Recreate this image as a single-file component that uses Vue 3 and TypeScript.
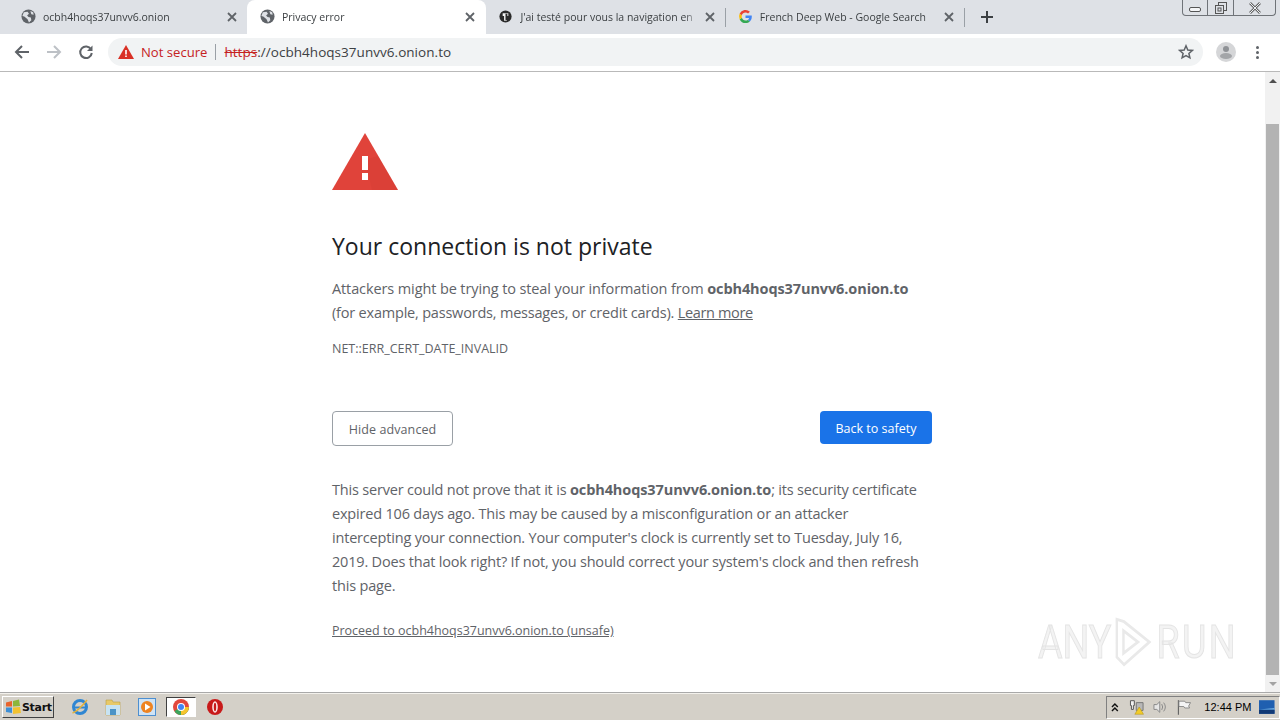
<script setup lang="ts">
interface Tab {
  title: string
  icon: 'globe' | 'dark' | 'google'
  active?: boolean
}

const tabs: Tab[] = [
  { title: 'ocbh4hoqs37unvv6.onion', icon: 'globe' },
  { title: 'Privacy error', icon: 'globe', active: true },
  { title: "J'ai testé pour vous la navigation en", icon: 'dark' },
  { title: 'French Deep Web - Google Search', icon: 'google' }
]
</script>

<template>
  <div class="screen">
    <div class="tabstrip">
      <div v-for="(tab, i) in tabs" :key="i" class="tab" :class="{ active: tab.active, sep: i >= 2 }">
        <svg v-if="tab.icon === 'globe'" class="favicon" viewBox="0 0 16 16">
          <circle cx="8" cy="8" r="7.5" fill="#5f6368" />
          <path d="M3 3.5 7 3l1.5 2-2 2L8 8.500l2.500.5.5 3-2.500 2.500L7 11 3.500 8 1.500 7.500zM10 2l3 1.500.5 2.500-2.500-.5z" fill="#dee1e6" />
        </svg>
        <svg v-else-if="tab.icon === 'dark'" class="favicon" viewBox="0 0 16 16">
          <circle cx="8" cy="8" r="6.500" fill="#2b2b2b" />
          <path d="M5 4.500h6v3H9.500v5h-3v-5H5z" fill="#f4f4f4" />
          <path d="M8 5h2v7H8z" fill="#2b2b2b" />
        </svg>
        <svg v-else class="favicon" viewBox="0 0 16 16">
          <path d="M14.700 8.200c0-.5 0-1-.1-1.400H8v2.700h3.800a3.200 3.200 0 0 1-1.400 2.100l2.200 1.700c1.300-1.200 2.100-3 2.100-5.100z" fill="#4285f4" />
          <path d="M8 15c1.900 0 3.400-.6 4.600-1.700l-2.200-1.700c-.6.400-1.400.7-2.400.7-1.800 0-3.400-1.200-3.900-2.900L1.800 11.100A7 7 0 0 0 8 15z" fill="#34a853" />
          <path d="M4.100 9.400a4.300 4.300 0 0 1 0-2.800L1.800 4.900a7 7 0 0 0 0 6.200z" fill="#fbbc05" />
          <path d="M8 3.800c1 0 2 .4 2.700 1l2-2A7 7 0 0 0 1.800 4.900l2.300 1.700C4.600 5 6.200 3.800 8 3.800z" fill="#ea4335" />
        </svg>
        <span class="tab-title">{{ tab.title }}</span>
        <svg class="tab-close" viewBox="0 0 10 10">
          <path d="M1 1l8 8M9 1l-8 8" stroke="#5f6368" stroke-width="1.800" fill="none" />
        </svg>
      </div>
      <div class="new-tab">
        <svg viewBox="0 0 12 12" width="12" height="12">
          <path d="M6 0v12M0 6h12" stroke="#3c4043" stroke-width="2" fill="none" />
        </svg>
      </div>
      <div class="win-controls">
        <div class="win-btn min">
          <svg viewBox="0 0 14 8" width="14" height="8"><rect x="1.500" y="2.500" width="11" height="4" rx="1.500" fill="#f4f5f7" stroke="#555" /></svg>
        </div>
        <div class="win-btn">
          <svg viewBox="0 0 14 14" width="14" height="14">
            <rect x="4.500" y="1.500" width="8" height="8" fill="none" stroke="#555" />
            <rect x="1.500" y="4.500" width="8" height="8" fill="#dee1e6" stroke="#555" />
            <rect x="4" y="7" width="3" height="3" fill="none" stroke="#555" />
          </svg>
        </div>
        <div class="win-btn close">
          <svg viewBox="0 0 14 12" width="14" height="12">
            <path d="M2 1l10 10M12 1L2 11" stroke="#666" stroke-width="2.600" fill="none" />
            <path d="M2 1l10 10M12 1L2 11" stroke="#eef0f3" stroke-width="1" fill="none" />
          </svg>
        </div>
      </div>
    </div>

    <div class="toolbar">
      <button class="nav-btn">
        <svg viewBox="0 0 16 16" width="16" height="16"><path d="M15 8H2.500M8 2 2 8l6 6" stroke="#5f6368" stroke-width="2" fill="none" /></svg>
      </button>
      <button class="nav-btn">
        <svg viewBox="0 0 16 16" width="16" height="16"><path d="M1 8h12.500M8 2l6 6-6 6" stroke="#bdc1c6" stroke-width="2" fill="none" /></svg>
      </button>
      <button class="nav-btn">
        <svg viewBox="0 0 16 16" width="16" height="16">
          <path d="M13 5.200A5.800 5.800 0 1 0 13.800 9" stroke="#5f6368" stroke-width="2" fill="none" />
          <path d="M14.500 1.500v5.500H9z" fill="#5f6368" />
        </svg>
      </button>
      <div class="omnibox">
        <svg class="warn-small" viewBox="0 0 16 14" width="16" height="14">
          <path d="M8 0l8 14H0z" fill="#d93025" />
          <path d="M7.200 5h1.600v4.500H7.200zM7.200 10.500h1.600V12H7.200z" fill="#fff" />
        </svg>
        <span class="not-secure">Not secure</span>
        <span class="omni-sep"></span>
        <span class="url"><s class="scheme">https</s>://ocbh4hoqs37unvv6.onion.to</span>
        <svg class="star" viewBox="0 0 16 16" width="16" height="16">
          <path d="M8 1.800l1.800 4.200 4.500.4-3.400 3 1 4.400L8 11.500l-3.900 2.300 1-4.400-3.400-3 4.500-.4z" fill="none" stroke="#5f6368" stroke-width="1.500" />
        </svg>
      </div>
      <div class="avatar">
        <svg viewBox="0 0 20 20" width="20" height="20">
          <circle cx="10" cy="10" r="10" fill="#d5d6d8" />
          <circle cx="10" cy="7" r="3" fill="#8f9296" />
          <ellipse cx="10" cy="14" rx="6" ry="3" fill="#a3a5a8" />
        </svg>
      </div>
      <div class="menu-dots"><i></i><i></i><i></i></div>
    </div>

    <div class="viewport">
      <div class="page">
        <main class="interstitial">
          <svg class="warn-big" viewBox="0 0 66 58" width="66" height="58">
            <path d="M33 1l33 57H0z" fill="#e0433a" />
            <path d="M33 28l7 30h26L46 24z" fill="#c9382f" opacity=".2" />
            <path d="M30 24h6v14h-6zM30 41h6v7h-6z" fill="#fff" />
          </svg>
          <h1>Your connection is not private</h1>
          <p class="lead">
            Attackers might be trying to steal your information from <b>ocbh4hoqs37unvv6.onion.to</b><br />
            <span class="lead-second">(for example, passwords, messages, or credit cards).</span> <a>Learn more</a>
          </p>
          <div class="err-code">NET::ERR_CERT_DATE_INVALID</div>
          <div class="actions">
            <button class="btn-outline">Hide advanced</button>
            <button class="btn-primary">Back to safety</button>
          </div>
          <p class="details">
            This server could not prove that it is <b>ocbh4hoqs37unvv6.onion.to</b>; its security certificate<br />
            expired 106 days ago. This may be caused by a misconfiguration or an attacker<br />
            intercepting your connection. Your computer's clock is currently set to Tuesday, July 16,<br />
            2019. Does that look right? If not, you should correct your system's clock and then refresh<br />
            this page.
          </p>
          <a class="proceed">Proceed to ocbh4hoqs37unvv6.onion.to (unsafe)</a>
        </main>
      </div>
      <div class="scrollbar">
        <div class="scroll-arrow"><span class="arrow-up"></span></div>
        <div class="scroll-track"><div class="scroll-thumb"></div></div>
        <div class="scroll-arrow"><span class="arrow-down"></span></div>
      </div>
      <div class="watermark">
        <span>ANY</span>
        <svg viewBox="0 0 64 66" width="64" height="66">
          <path d="M6 3v50l12 10 42-30L18 6z" fill="none" stroke="#e9e9e9" stroke-width="4" />
          <path d="M17 18v30l24-15z" fill="none" stroke="#e9e9e9" stroke-width="4" />
        </svg>
        <span class="wm-run">RUN</span>
      </div>
    </div>

    <div class="taskbar">
      <button class="start">
        <svg viewBox="0 0 16 16" width="16" height="16">
          <path d="M1 3.500 7 2v5.500H1z" fill="#e8632c" />
          <path d="M8 2l6-1.500 1 6.500-7 .5z" fill="#8cb63c" />
          <path d="M1 8.500h6V14l-6-1z" fill="#3d8fd6" />
          <path d="M8 8.500l7-.5 1 6-8 1z" fill="#f2c230" />
        </svg>
        Start
      </button>
      <div class="quick">
        <svg viewBox="0 0 18 18" width="18" height="18">
          <circle cx="9" cy="9" r="6.500" fill="none" stroke="#2f86d2" stroke-width="3" />
          <path d="M3 9.500h12" stroke="#2f86d2" stroke-width="2" />
          <path d="M1.500 15C5 14 12 7 16 2" stroke="#e3b23c" stroke-width="1.500" fill="none" />
        </svg>
        <svg viewBox="0 0 18 18" width="18" height="18">
          <path d="M2 2h6l1 2h7v13H2z" fill="#e8c969" stroke="#b99d45" stroke-width=".6" />
          <path d="M2 7h14v10H2z" fill="#c7e3f3" />
          <path d="M6 17v-6h6v6z" fill="#4a93c7" />
        </svg>
        <svg viewBox="0 0 18 18" width="18" height="18">
          <rect x=".5" y=".5" width="17" height="17" fill="#cfe3f5" stroke="#4d8fd0" />
          <circle cx="9" cy="9" r="6" fill="#ee8321" />
          <path d="M7 5.500v7l5.500-3.500z" fill="#fff" />
        </svg>
        <span class="task-active">
          <svg viewBox="0 0 16 16" width="16" height="16">
            <circle cx="8" cy="8" r="8" fill="#e2483d" />
            <path d="M1.500 12 8 8h8a8 8 0 0 1-8 8 8 8 0 0 1-6.500-4z" fill="#3ba55c" />
            <path d="M8 8h8a8 8 0 0 1-8 8z" fill="#f6c52c" />
            <circle cx="8" cy="8" r="4" fill="#fff" />
            <circle cx="8" cy="8" r="3" fill="#4285f4" />
          </svg>
        </span>
        <svg viewBox="0 0 18 18" width="18" height="18">
          <circle cx="9" cy="9" r="8" fill="#c81a1a" />
          <ellipse cx="9" cy="9" rx="2.800" ry="5.800" fill="#fbe9e9" />
          <ellipse cx="9" cy="9" rx="1.200" ry="4.200" fill="#c81a1a" />
        </svg>
      </div>
      <div class="tray">
        <svg viewBox="0 0 8 9" width="8" height="9"><path d="M1 4l3-3 3 3M1 8l3-3 3 3" stroke="#111" stroke-width="1.500" fill="none" /></svg>
        <svg class="tray-net" viewBox="0 0 16 16" width="16" height="16">
          <path d="M1.500 1.500h4v5h-1v4h-2v-4h-1z" fill="#f2f2f2" stroke="#555" />
          <path d="M7.500 3.500h7v8h-7z" fill="#b8b8b8" stroke="#777" />
          <path d="M10.500 8l4.500 7.500H6z" fill="#f1cb29" stroke="#a98a10" stroke-width=".5" />
        </svg>
        <svg viewBox="0 0 16 16" width="16" height="16">
          <path d="M2 5.500h3l3-3v11l-3-3H2z" fill="#e6e6e6" stroke="#888" />
          <path d="M10 5q2 3 0 6M12 3.500q3.500 4.500 0 9" stroke="#888" fill="none" />
        </svg>
        <svg viewBox="0 0 16 16" width="16" height="16">
          <path d="M2.500 1v15" stroke="#666" stroke-width="1.200" />
          <path d="M3 2h6l1 1.500h5l-2 3.500 1 2H9L8 7.500H3z" fill="#f4f4f4" stroke="#777" stroke-width=".8" />
        </svg>
        <span class="clock">12:44 PM</span>
        <svg class="show-desktop" viewBox="0 0 16 14" width="16" height="14">
          <rect width="16" height="14" fill="#1f5fb0" />
          <path d="M0 10h16v4H0z" fill="#123a75" />
          <path d="M0 9.500 16 8v1.500H0z" fill="#73b1e4" />
        </svg>
      </div>
    </div>
  </div>
</template>

<style scoped>
.screen {
  width: 1280px;
  height: 720px;
  display: flex;
  flex-direction: column;
  overflow: hidden;
  font-family: "Open Sans", "Noto Sans", sans-serif;
  color: #5f6368;
  background: #fff;
}

/* tab strip */
.tabstrip {
  height: 34px;
  flex: none;
  display: flex;
  background: #dee1e6;
}

.tab {
  width: 239.400px;
  height: 34px;
  flex: none;
  display: flex;
  align-items: center;
  padding: 0 11px 1px 21px;
  box-sizing: border-box;
  position: relative;
  font-size: 10.500px;
  color: #3c4043;
}

.tab.active {
  background: #fff;
  border-radius: 8px 8px 0 0;
  padding-left: 13px;
}

.tab:first-child {
  width: 247px;
  padding-right: 10px;
}

.tab.sep {
  padding-left: 12px;
}

.tab.sep::after {
  content: "";
  position: absolute;
  right: 0;
  top: 8px;
  height: 19px;
  width: 1px;
  background: #9aa0a6;
}

.favicon {
  width: 15px;
  height: 15px;
  flex: none;
  margin-right: 7px;
}

.tab-title {
  flex: 1;
  white-space: nowrap;
  overflow: hidden;
  -webkit-mask-image: linear-gradient(to right, #000 92%, transparent 100%);
  mask-image: linear-gradient(to right, #000 92%, transparent 100%);
}

.tab-close {
  width: 10px;
  height: 10px;
  flex: none;
  margin-left: 6px;
}

.new-tab {
  width: 44px;
  display: flex;
  align-items: center;
  justify-content: center;
}

.win-controls {
  margin-left: auto;
  margin-right: 4px;
  height: 16px;
  display: flex;
  border: 1px solid #6f7378;
  border-top: none;
  border-radius: 0 0 4px 4px;
  box-sizing: border-box;
}

.win-btn {
  width: 25px;
  display: flex;
  align-items: center;
  justify-content: center;
  border-right: 1px solid #6f7378;
}

.win-btn.min {
  padding-top: 3px;
  box-sizing: border-box;
}

.win-btn.close {
  width: 41px;
  border-right: none;
}

/* toolbar */
.toolbar {
  height: 38px;
  flex: none;
  display: flex;
  align-items: center;
  padding: 0 8px 1px 6px;
  box-sizing: border-box;
  background: #fff;
  border-bottom: 1px solid #b9b9b9;
}

.nav-btn {
  width: 32px;
  height: 28px;
  padding: 0;
  border: none;
  background: none;
  display: flex;
  align-items: center;
  justify-content: center;
}

.omnibox {
  width: 1095px;
  height: 28px;
  margin-left: 6px;
  display: flex;
  align-items: center;
  padding: 0 9px 0 10px;
  box-sizing: border-box;
  background: #f1f3f4;
  border-radius: 14px;
  font-size: 13.500px;
}

.warn-small {
  flex: none;
}

.not-secure {
  margin-left: 7px;
  color: #c5221f;
  font-size: 13.100px;
}

.omni-sep {
  width: 1px;
  height: 16px;
  margin: 0 8px;
  background: #9aa0a6;
}

.url {
  color: #3c4043;
  flex: 1;
  letter-spacing: 0.040px;
}

.scheme {
  color: #c5221f;
}

.avatar {
  width: 20px;
  height: 20px;
  margin-left: 13px;
}

.menu-dots {
  margin-left: 20px;
  display: flex;
  flex-direction: column;
  gap: 2px;
}

.menu-dots i {
  width: 3px;
  height: 3px;
  background: #5f6368;
  border-radius: 50%;
}

/* page */
.viewport {
  flex: 1;
  display: flex;
  position: relative;
  min-height: 0;
  border-bottom: 1px solid #a9a9a9;
}

.page {
  flex: 1;
  min-width: 0;
  overflow: hidden;
}

.interstitial {
  width: 600px;
  margin-left: 332px;
  padding-top: 60px;
  font-size: 14.500px;
  letter-spacing: -0.110px;
  line-height: 24px;
}

.warn-big {
  display: block;
}

h1 {
  margin: 38px 0 0;
  font-size: 23px;
  letter-spacing: 0;
  line-height: 36px;
  font-weight: 400;
  color: #202124;
}

.lead {
  margin: 13px 0 0;
}

.lead-second {
  letter-spacing: -0.200px;
}

.lead a,
.proceed {
  color: #5f6368;
  text-decoration: underline;
}

.lead a {
  letter-spacing: -0.350px;
}

b {
  font-weight: 700;
  letter-spacing: -0.100px;
}

.err-code {
  margin-top: 12px;
  font-size: 12.500px;
  letter-spacing: 0;
  line-height: 24px;
  color: #5f6368;
}

.actions {
  display: flex;
  justify-content: space-between;
  align-items: flex-start;
  margin-top: 50px;
}

.btn-outline,
.btn-primary {
  font-family: inherit;
  font-size: 12.500px;
  border-radius: 4px;
  padding: 1px 0 0;
}

.btn-outline {
  width: 121px;
  height: 35px;
  background: #fff;
  border: 1px solid #9aa0a6;
  color: #5f6368;
  letter-spacing: 0.100px;
}

.btn-primary {
  width: 112px;
  height: 33px;
  background: #1a73e8;
  border: none;
  color: #fff;
  letter-spacing: 0;
}

.details {
  margin: 32px 0 0;
  white-space: nowrap;
  letter-spacing: -0.190px;
}

.proceed {
  display: block;
  margin-top: 21px;
  font-size: 12.500px;
  letter-spacing: -0.020px;
}

/* scrollbar */
.scrollbar {
  width: 15px;
  flex: none;
  display: flex;
  flex-direction: column;
  background: #f1f1f1;
}

.scroll-arrow {
  height: 17px;
  flex: none;
  display: flex;
  align-items: center;
  justify-content: center;
}

.arrow-up {
  border: 4px solid transparent;
  border-top: none;
  border-bottom: 4px solid #505050;
}

.arrow-down {
  border: 4px solid transparent;
  border-bottom: none;
  border-top: 4px solid #a3a3a3;
}

.scroll-track {
  flex: 1;
  padding: 35px 1px 0;
  display: flex;
}

.scroll-thumb {
  flex: 1;
  background: #b3b3b3;
}

.watermark {
  position: absolute;
  left: 1038px;
  top: 537px;
  display: flex;
  align-items: center;
  gap: 2px;
  font-family: "Liberation Sans Narrow", "Roboto", sans-serif;
  font-size: 47px;
  line-height: 66px;
  color: #f3f3f3;
  -webkit-text-stroke: 1px #e4e4e4;
  transform: scaleX(0.8);
  transform-origin: left center;
  width: 250px;
}

.wm-run {
  margin-left: 4px;
  letter-spacing: 3px;
}

/* taskbar */
.taskbar {
  height: 27px;
  flex: none;
  display: flex;
  align-items: center;
  background: #d4d0c8;
  border-top: 1px solid #f3f1ec;
  box-sizing: border-box;
  font-family: "Liberation Sans", sans-serif;
  color: #000;
}

.start {
  width: 52px;
  height: 22px;
  margin-left: 2px;
  padding: 0 0 0 2px;
  display: flex;
  align-items: center;
  gap: 1px;
  font-family: "DejaVu Sans", sans-serif;
  font-size: 11px;
  letter-spacing: -0.300px;
  font-weight: 700;
  background: #d4d0c8;
  color: #111;
  border: 1px solid;
  border-color: #fff #404040 #404040 #fff;
}

.quick {
  display: flex;
  align-items: center;
  margin-left: 17px;
  gap: 15.400px;
}

.task-active {
  width: 30px;
  height: 20px;
  margin: 0 -6px 0 -5px;
  display: flex;
  align-items: center;
  justify-content: center;
  background: #fff;
  border: 1px solid;
  border-color: #404040 #fff #fff #404040;
  box-sizing: border-box;
}

.tray {
  margin-left: auto;
  height: 23px;
  width: 174px;
  padding: 0 4px 0 4px;
  display: flex;
  align-items: center;
  box-sizing: border-box;
  border: 1px solid;
  border-color: #808080 #fff #fff #808080;
  gap: 8px;
  font-size: 11px;
}

.tray-net {
  margin-left: 2px;
}

.clock {
  white-space: nowrap;
  flex: 1;
  text-align: center;
  padding-left: 5px;
}
</style>

<style>
html,
body {
  margin: 0;
  background: #fff;
}
</style>
